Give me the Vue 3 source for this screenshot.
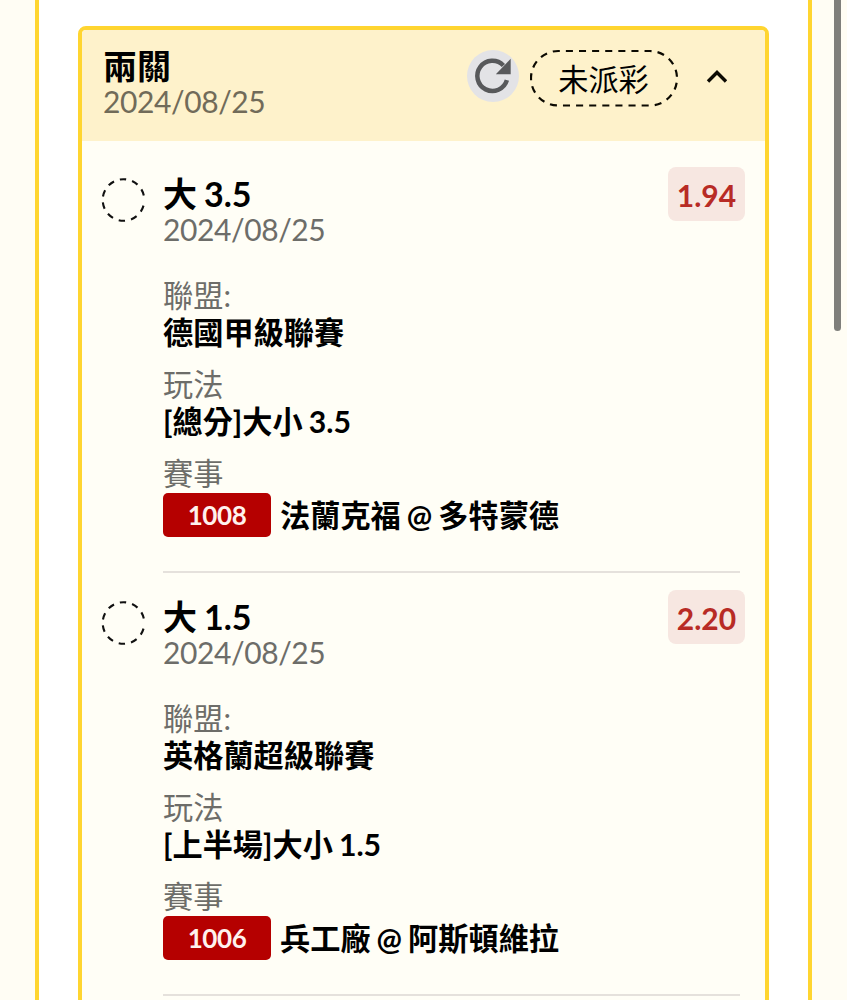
<script setup>
const bets = [
  {
    pick: '大 3.5', date: '2024/08/25', odds: '1.94', league: '德國甲級聯賽',
    play: '[總分]大小 3.5', code: '1008', match: '法蘭克福 @ 多特蒙德',
  },
  {
    pick: '大 1.5', date: '2024/08/25', odds: '2.20', league: '英格蘭超級聯賽',
    play: '[上半場]大小 1.5', code: '1006', match: '兵工廠 @ 阿斯頓維拉',
  },
]
</script>

<template>
  <div class="page">
    <main class="panel">
      <section class="card">
        <header class="head">
          <div class="head-text">
            <div class="line title">兩關</div>
            <div class="line muted date">2024/08/25</div>
          </div>
          <button class="refresh" aria-label="refresh">
            <svg width="52" height="52" viewBox="0 0 52 52">
              <path d="M39.9 30.2A15.1 15.1 0 1 1 36.4 15.5" fill="none" stroke="#58595b" stroke-width="4.5" />
              <path d="M43.7 8.7V24.3H28.8Z" fill="#58595b" />
            </svg>
          </button>
          <div class="status">
            <svg class="outline" width="150" height="58" viewBox="0 0 150 58">
              <rect x="1" y="2" width="146" height="54.5" rx="27.2" fill="none" stroke="#0c0a02" stroke-width="2.2" pathLength="351" stroke-dasharray="7 6" stroke-dashoffset="5.4" />
            </svg>
            <span>未派彩</span>
          </div>
          <svg class="chevron" width="22" height="16" viewBox="0 0 22 16">
            <path d="M2 12.5L11 3.5L20 12.5" fill="none" stroke="#0c0a02" stroke-width="3.4" />
          </svg>
        </header>
        <div class="list">
          <article v-for="bet in bets" :key="bet.code" class="bet">
            <svg class="ring" width="46" height="46" viewBox="0 0 46 46">
              <circle cx="22.5" cy="23" r="20.8" fill="none" stroke="#111" stroke-width="2.1" pathLength="360" stroke-dasharray="18 16.8" stroke-dashoffset="-16" />
            </svg>
            <div class="body">
              <div class="top">
                <div>
                  <div class="line title">{{ bet.pick }}</div>
                  <div class="line muted date">{{ bet.date }}</div>
                </div>
                <div class="odds">{{ bet.odds }}</div>
              </div>
              <div class="field">
                <div class="line muted">聯盟:</div>
                <div class="line strong">{{ bet.league }}</div>
              </div>
              <div class="field">
                <div class="line muted">玩法</div>
                <div class="line strong">{{ bet.play }}</div>
              </div>
              <div class="field">
                <div class="line muted">賽事</div>
                <div class="match">
                  <span class="code">{{ bet.code }}</span>
                  <span class="line strong team">{{ bet.match }}</span>
                </div>
              </div>
            </div>
          </article>
        </div>
      </section>
    </main>
    <div class="scrollbar"></div>
  </div>
</template>

<style>
body {
  margin: 0;
  background: #fffdf4;
}
</style>

<style scoped>
.page {
  position: relative;
  box-sizing: border-box;
  width: 847px;
  height: 1000px;
  padding-left: 35px;
  overflow: hidden;
  background: #fffdf4;
  color: #000;
  font-family: Lato, "Noto Sans CJK TC", sans-serif;
  font-size: 30.2px;
}
.panel {
  box-sizing: border-box;
  width: 777px;
  height: 1010px;
  padding: 26px 39px 0;
  border: solid #ffd530;
  border-width: 0 4px;
  background: #fff;
}
.card {
  box-sizing: border-box;
  width: 691px;
  height: 1000px;
  overflow: hidden;
  border: 4px solid #ffd530;
  border-radius: 8px;
  background: #fffef6;
}
.head {
  box-sizing: border-box;
  display: flex;
  align-items: flex-start;
  height: 111px;
  padding: 18px 37px 0 21px;
  background: #fef2cb;
}
.head-text {
  flex: 1;
  margin-top: -1px;
}
.head .date {
  margin-top: -1px;
}
.line {
  height: 37px;
  line-height: 37px;
  white-space: nowrap;
}
.title {
  font-size: 34px;
  font-weight: 700;
  word-spacing: -1.3px;
}
.muted {
  color: #6d6d69;
}
.head .muted {
  color: #716b59;
}
.date {
  font-size: 30px;
  letter-spacing: -0.4px;
}
.strong {
  font-weight: 700;
  word-spacing: -1.3px;
}
.refresh {
  width: 52px;
  height: 52px;
  margin: 2px 11px 0 0;
  padding: 0;
  border: 0;
  border-radius: 50%;
  background: #e3e3e6;
}
.refresh svg {
  display: block;
}
.status {
  position: relative;
  width: 147px;
  height: 58px;
  margin: 1px 2px 0 0;
  line-height: 61px;
  text-align: center;
}
.outline {
  position: absolute;
  inset: 0;
}
.chevron {
  margin: 21px 0 0 27px;
}
.list {
  padding: 9px 20px 0 19px;
}
.bet {
  display: flex;
  height: 423px;
}
.ring {
  flex: none;
  margin: 27px 16px 0 0;
}
.body {
  box-sizing: border-box;
  width: 577px;
  border-bottom: 2px solid #e5e1dc;
}
.top {
  display: flex;
  justify-content: space-between;
  height: 109px;
  padding-top: 17px;
  margin-right: -5px;
  box-sizing: border-box;
}
.top .title {
  margin-top: 8px;
}
.top .date {
  margin-top: -1px;
}
.odds {
  width: 77px;
  height: 54px;
  border-radius: 8px;
  background: #f7e7e1;
  color: #b82b25;
  font-size: 30px;
  font-weight: 700;
  line-height: 56px;
  text-align: center;
}
.field {
  margin: 18px 0 -3px;
}
.match {
  display: flex;
  align-items: center;
  gap: 9px;
  margin-top: 1px;
}
.team {
  font-size: 30.2px;
}
.code {
  width: 108px;
  height: 44px;
  border-radius: 5px;
  background: #b50000;
  color: #fff1ed;
  font-size: 26px;
  font-weight: 700;
  letter-spacing: -0.4px;
  line-height: 45px;
  text-align: center;
}
.scrollbar {
  position: absolute;
  top: -10px;
  left: 834px;
  width: 7px;
  height: 341px;
  border-radius: 4px;
  background: #7f7f7b;
}
</style>
